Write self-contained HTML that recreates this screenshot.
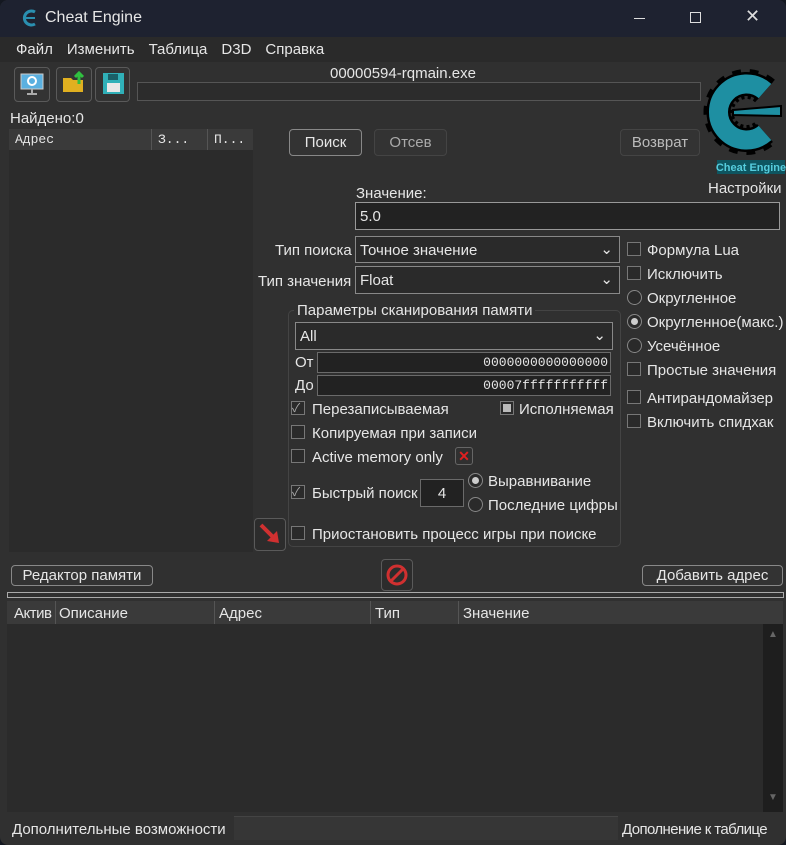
<!DOCTYPE html>
<html><head><meta charset="utf-8"><style>
*{box-sizing:border-box;margin:0;padding:0}
body{width:786px;height:845px;background:#141821;font-family:"Liberation Sans","Noto Sans CJK SC",sans-serif;font-size:15px;color:#e6e6e6;position:relative;overflow:hidden}
.a{position:absolute}
.win{left:0;top:0;width:786px;height:845px;background:#303030;border-radius:8px;overflow:hidden}
.title{left:0;top:0;width:786px;height:37px;background:#1e2230}
.menu{left:0;top:37px;width:786px;height:25px;background:#2a2a2a}
.btn{border:1px solid #5a5a5a;border-radius:4px;background:#333;text-align:center;color:#e6e6e6}
.in{background:#222;border:1px solid #6a6a6a}
.cb{width:14px;height:14px;border:1px solid #777;background:#2a2a2a}
.rb{width:15px;height:15px;border:1px solid #888;border-radius:50%;background:#2a2a2a}
.t{white-space:nowrap}
</style></head><body>
<div class="a win">
<div class="a title">
<svg class="a" style="left:20px;top:8px" width="20" height="20" viewBox="0 0 20 20"><path d="M15 4 A7 7 0 1 0 15 16" stroke="#2a8fb0" stroke-width="3" fill="none"/><path d="M6 10 H15" stroke="#2a8fb0" stroke-width="2"/></svg>
<div class="a t" style="left:45px;top:9px;font-size:16px">Cheat Engine</div>
<div class="a" style="left:634px;top:18px;width:11px;height:1px;background:#ddd"></div>
<div class="a" style="left:690px;top:12px;width:11px;height:11px;border:1px solid #ddd"></div>
<div class="a t" style="left:745px;top:6px;font-size:18px;color:#ddd">✕</div>
</div>
<div class="a menu"><div class="a t" style="left:16px;top:4px">Файл<span style="margin-left:14px">Изменить</span><span style="margin-left:14px">Таблица</span><span style="margin-left:14px">D3D</span><span style="margin-left:14px">Справка</span></div></div>
<div class="a btn" style="left:14px;top:67px;width:36px;height:35px"><svg width="30" height="30" viewBox="0 0 30 30"><rect x="4" y="6" width="22" height="15" fill="#5ab0e0" stroke="#ccc"/><circle cx="15" cy="13" r="4" fill="none" stroke="#fff" stroke-width="2"/><path d="M10 26h10M15 21v5" stroke="#aaa" stroke-width="2"/></svg></div>
<div class="a btn" style="left:56px;top:67px;width:36px;height:35px"><svg width="30" height="30" viewBox="0 0 30 30"><path d="M4 10h8l2 2h10v12H4z" fill="#e0b020"/><path d="M20 16V6M16 9l4-4 4 4" stroke="#30c040" stroke-width="3" fill="none"/></svg></div>
<div class="a btn" style="left:95px;top:67px;width:35px;height:35px"><svg width="30" height="30" viewBox="0 0 30 30"><rect x="5" y="5" width="21" height="21" fill="#30b0b8"/><rect x="9" y="15" width="13" height="9" fill="#e8e8e8"/><rect x="10" y="6" width="10" height="6" fill="#1a6068"/></svg></div>
<div class="a t" style="left:330px;top:65px">00000594-rqmain.exe</div>
<div class="a" style="left:137px;top:82px;width:564px;height:19px;border:1px solid #555;background:#2c2c2c"></div>
<svg class="a" style="left:703px;top:62px" width="83" height="116" viewBox="0 0 83 116">
<path d="M62 29 A28 28 0 1 0 62 71" stroke="#000" stroke-width="24" fill="none"/>
<path d="M62 29 A28 28 0 1 0 62 71" stroke="#000" stroke-width="30" stroke-dasharray="6 6" fill="none"/>
<path d="M62 29 A28 28 0 1 0 62 71" stroke="#1e8fa2" stroke-width="19" fill="none"/>
<path d="M30 48 L78 44 L78 54 L30 53 Z" fill="#1e8fa2" stroke="#000" stroke-width="2"/>
<rect x="14" y="98" width="68" height="14" fill="#0e5560"/><text x="48" y="109" font-size="11" fill="#5cd" text-anchor="middle" font-family="Liberation Sans" font-weight="bold">Cheat Engine</text></svg>
<div class="a t" style="left:10px;top:110px">Найдено:0</div>
<div class="a" style="left:9px;top:129px;width:244px;height:423px;background:#2b2b2b"></div>
<div class="a" style="left:9px;top:129px;width:244px;height:21px;background:#3a3a3a;font-family:'Liberation Mono',monospace;font-size:13px"><span class="a" style="left:6px;top:3px">Адрес</span><span class="a" style="left:142px;top:0;height:21px;border-left:1px solid #555;padding:3px 0 0 6px">З...</span><span class="a" style="left:198px;top:0;height:21px;border-left:1px solid #555;padding:3px 0 0 6px">П...</span></div>
<div class="a btn" style="left:289px;top:129px;width:73px;height:27px;line-height:25px;border-color:#888">Поиск</div>
<div class="a btn" style="left:374px;top:129px;width:73px;height:27px;line-height:25px;color:#aaa;border-color:#444">Отсев</div>
<div class="a btn" style="left:620px;top:129px;width:80px;height:27px;line-height:25px;color:#bbb;border-color:#444">Возврат</div>
<div class="a t" style="left:708px;top:180px">Настройки</div>
<div class="a t" style="left:356px;top:185px">Значение:</div>
<div class="a in" style="left:355px;top:202px;width:425px;height:28px;padding:5px 4px;border-color:#999">5.0</div>
<div class="a t" style="left:275px;top:242px">Тип поиска</div>
<div class="a in" style="left:355px;top:236px;width:265px;height:27px;padding:5px 4px;border-color:#888;background:#2a2a2a">Точное значение<span style="position:absolute;right:6px;top:3px">⌄</span></div>
<div class="a t" style="left:258px;top:273px">Тип значения</div>
<div class="a in" style="left:355px;top:266px;width:265px;height:28px;padding:5px 4px;border-color:#888;background:#2a2a2a">Float<span style="position:absolute;right:6px;top:3px">⌄</span></div>
<div class="a" style="left:288px;top:310px;width:333px;height:237px;border:1px solid #444;border-radius:5px"></div>
<div class="a t" style="left:294px;top:302px;background:#303030;padding:0 3px">Параметры сканирования памяти</div>
<div class="a in" style="left:295px;top:322px;width:318px;height:28px;padding:5px 4px;border-color:#888;background:#2a2a2a">All<span style="position:absolute;right:6px;top:3px">⌄</span></div>
<div class="a t" style="left:295px;top:354px">От</div>
<div class="a in" style="left:317px;top:352px;width:294px;height:21px;text-align:right;padding:2px 2px;font-family:'Liberation Mono',monospace;font-size:13px">0000000000000000</div>
<div class="a t" style="left:295px;top:377px">До</div>
<div class="a in" style="left:317px;top:375px;width:294px;height:21px;text-align:right;padding:2px 2px;font-family:'Liberation Mono',monospace;font-size:13px">00007fffffffffff</div>
<div class="a cb" style="left:291px;top:401px;color:#aaa;font-size:12px;line-height:12px">✓</div><div class="a t" style="left:312px;top:401px">Перезаписываемая</div>
<div class="a cb" style="left:500px;top:401px;padding:2px"><div style="width:8px;height:8px;background:#bbb"></div></div><div class="a t" style="left:519px;top:401px">Исполняемая</div>
<div class="a cb" style="left:291px;top:425px"></div><div class="a t" style="left:312px;top:425px">Копируемая при записи</div>
<div class="a cb" style="left:291px;top:449px"></div><div class="a t" style="left:312px;top:449px">Active memory only</div>
<div class="a" style="left:455px;top:447px;width:18px;height:18px;border:1px solid #666;border-radius:3px;color:#e02020;font-weight:bold;text-align:center;line-height:16px;font-size:14px">✕</div>
<div class="a cb" style="left:291px;top:485px;color:#aaa;font-size:12px;line-height:12px">✓</div><div class="a t" style="left:312px;top:485px">Быстрый поиск</div>
<div class="a in" style="left:420px;top:479px;width:44px;height:28px;text-align:center;padding-top:5px">4</div>
<div class="a rb" style="left:468px;top:473px;padding:3px"><div style="width:7px;height:7px;border-radius:50%;background:#ccc"></div></div><div class="a t" style="left:488px;top:473px">Выравнивание</div>
<div class="a rb" style="left:468px;top:497px"></div><div class="a t" style="left:488px;top:497px">Последние цифры</div>
<div class="a btn" style="left:254px;top:518px;width:32px;height:33px;background:#2c2c2c"><svg width="30" height="30" viewBox="0 0 30 30"><path d="M6 6 L20 20" stroke="#d03030" stroke-width="4"/><path d="M24 24 L12 22 L22 12 Z" fill="#d03030"/></svg></div>
<div class="a cb" style="left:291px;top:526px"></div><div class="a t" style="left:312px;top:526px">Приостановить процесс игры при поиске</div>
<div class="a cb" style="left:627px;top:242px"></div><div class="a t" style="left:647px;top:242px">Формула Lua</div>
<div class="a cb" style="left:627px;top:266px"></div><div class="a t" style="left:647px;top:266px">Исключить</div>
<div class="a rb" style="left:627px;top:290px"></div><div class="a t" style="left:647px;top:290px">Округленное</div>
<div class="a rb" style="left:627px;top:314px;padding:3px"><div style="width:7px;height:7px;border-radius:50%;background:#ccc"></div></div><div class="a t" style="left:647px;top:314px">Округленное(макс.)</div>
<div class="a rb" style="left:627px;top:338px"></div><div class="a t" style="left:647px;top:338px">Усечённое</div>
<div class="a cb" style="left:627px;top:362px"></div><div class="a t" style="left:647px;top:362px">Простые значения</div>
<div class="a cb" style="left:627px;top:390px"></div><div class="a t" style="left:647px;top:390px">Антирандомайзер</div>
<div class="a cb" style="left:627px;top:414px"></div><div class="a t" style="left:647px;top:414px">Включить спидхак</div>
<div class="a btn" style="left:11px;top:565px;width:142px;height:21px;line-height:19px;border-color:#888">Редактор памяти</div>
<div class="a btn" style="left:381px;top:559px;width:32px;height:32px;background:#2c2c2c"><svg width="30" height="30" viewBox="0 0 30 30"><circle cx="15" cy="15" r="9" stroke="#d03030" stroke-width="3" fill="none"/><path d="M9 21 L21 9" stroke="#d03030" stroke-width="3"/></svg></div>
<div class="a btn" style="left:642px;top:565px;width:141px;height:21px;line-height:19px;border-color:#888">Добавить адрес</div>
<div class="a" style="left:7px;top:592px;width:777px;height:6px;border:1px solid #aaa"></div>
<div class="a" style="left:7px;top:601px;width:776px;height:23px;background:#3a3a3a"></div>
<div class="a t" style="left:14px;top:605px;letter-spacing:-0.5px">Актив</div>
<div class="a" style="left:55px;top:601px;height:23px;border-left:1px solid #555"></div><div class="a t" style="left:59px;top:605px">Описание</div>
<div class="a" style="left:214px;top:601px;height:23px;border-left:1px solid #555"></div><div class="a t" style="left:219px;top:605px">Адрес</div>
<div class="a" style="left:370px;top:601px;height:23px;border-left:1px solid #555"></div><div class="a t" style="left:375px;top:605px">Тип</div>
<div class="a" style="left:458px;top:601px;height:23px;border-left:1px solid #555"></div><div class="a t" style="left:463px;top:605px">Значение</div>
<div class="a" style="left:7px;top:624px;width:776px;height:188px;background:#2b2b2b"></div>
<div class="a" style="left:763px;top:624px;width:20px;height:188px;background:#1e1e1e;color:#666;font-size:10px;text-align:center"><div style="margin-top:5px">▲</div><div style="margin-top:152px">▼</div></div>
<div class="a" style="left:234px;top:816px;width:384px;height:24px;background:#363636;border-top:1px solid #444"></div>
<div class="a t" style="left:12px;top:821px">Дополнительные возможности</div>
<div class="a t" style="left:622px;top:821px;letter-spacing:-0.6px">Дополнение к таблице</div>
</div>
</body></html>
